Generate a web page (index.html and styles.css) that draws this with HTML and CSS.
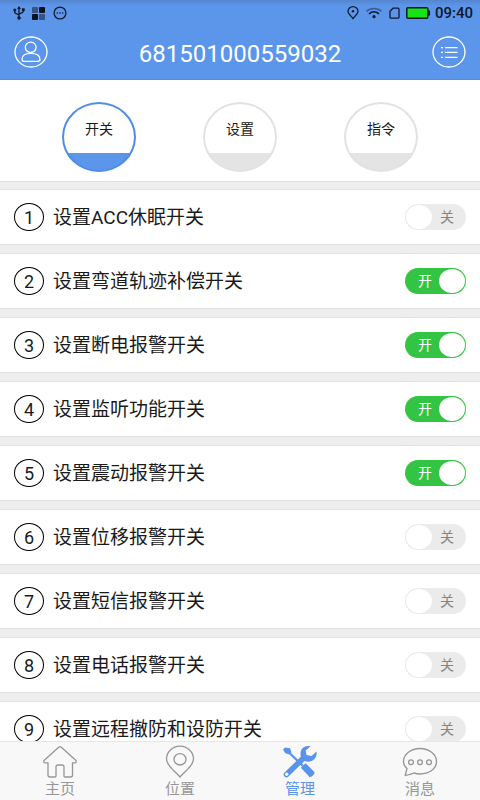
FILE: index.html
```html
<!DOCTYPE html>
<html lang="zh-CN">
<head>
<meta charset="utf-8">
<meta name="viewport" content="width=device-width, initial-scale=1">
<title>管理</title>
<link rel="stylesheet" href="styles.css">
</head>
<body>
<div class="app">
  <header class="top">
    <div class="status">
      <div class="status-group status-left">
        <svg width="12" height="14" viewBox="0 0 12 14" fill="none" stroke="#10182b" stroke-width="1.3"><path d="M6 1v11M1.7 4v2.3c0 1.8 4.3 1.4 4.3 3.4M10.3 3.500v2c0 1.800-4.300 1.500-4.300 3.200"/><path d="M6 0l2 3H4z" fill="#10182b" stroke="none"/><circle cx="1.800" cy="4" r="1.500" fill="#10182b" stroke="none"/><path d="M8.900 2.300h2.800v2.800H8.900z" fill="#10182b" stroke="none"/><circle cx="6" cy="12" r="1.800" fill="#10182b" stroke="none"/></svg>
        <svg width="14" height="13" viewBox="0 0 14 13"><g fill="#0c1120"><rect x="7" y="0" width="6" height="6" rx="1"/><rect x="0" y="7" width="6" height="6" rx="1"/></g><g fill="#37537f"><rect x="0" y="0" width="6" height="6" rx="1"/><rect x="7" y="7" width="6" height="6" rx="1"/></g></svg>
        <svg width="14" height="14" viewBox="0 0 14 14" fill="#10182b"><circle cx="7" cy="7" r="5.900" fill="none" stroke="#10182b" stroke-width="1.300"/><circle cx="4.300" cy="7" r=".8"/><circle cx="7" cy="7" r=".8"/><circle cx="9.700" cy="7" r=".8"/></svg>
      </div>
      <div class="status-group status-right">
        <svg width="12" height="14" viewBox="0 0 12 14" fill="none" stroke="#10182b" stroke-width="1.300"><path d="M6 12.500C4.500 10.500 1 8 1 5.300a5 4.600 0 0 1 10 0C11 8 7.500 10.500 6 12.500z"/><circle cx="6" cy="5.300" r="1.200" fill="#10182b" stroke="none"/></svg>
        <svg width="18" height="12" viewBox="0 0 18 12" fill="none" stroke-width="1.600"><path d="M1.500 4.300C5.500.5 12.500.5 16.500 4.300" stroke="#3b5d97"/><path d="M4 6.900c3-2.600 7-2.600 10 0" stroke="#10182b"/><circle cx="9" cy="9.700" r="1.600" fill="#10182b"/></svg>
        <svg width="11" height="13" viewBox="0 0 11 13" fill="none" stroke="#10182b" stroke-width="1.300"><path d="M4 1.200h5q1 0 1 1v8q0 1-1 1H2q-1 0-1-1V4.200z"/></svg>
        <svg width="24" height="12" viewBox="0 0 24 12"><rect x=".8" y=".8" width="21" height="10.400" rx="1" fill="#17e317" stroke="#10182b" stroke-width="1.500"/><path d="M22 3.500h2v5h-2z" fill="#10182b"/></svg>
        <time class="clock">09:40</time>
      </div>
    </div>
    <div class="bar">
      <button class="round-btn" type="button" aria-label="用户">
        <svg width="34" height="32" viewBox="0 0 34 32" fill="none" stroke="#fff" stroke-width="1.300"><ellipse cx="17" cy="16" rx="16" ry="15"/><ellipse cx="16.700" cy="11.300" rx="5.400" ry="5.200"/><path d="M10 25.300q-2 0-2-2c0-4 4-6 9-6s9 2 9 6q0 2-2 2z"/></svg>
      </button>
      <h1 class="title">681501000559032</h1>
      <button class="round-btn" type="button" aria-label="列表">
        <svg width="34" height="32" viewBox="0 0 34 32" fill="none" stroke="#fff" stroke-width="1.300"><ellipse cx="17" cy="16" rx="16" ry="15"/><path d="M9 11.700h2M13 11.700h12.500M9 16.300h2M13 16.300h12.500M9 21.300h2M13 21.300h12.500"/></svg>
      </button>
    </div>
  </header>

  <main class="content">
    <div class="tabs">
      <button class="tab tab-active" type="button">开关</button>
      <button class="tab" type="button">设置</button>
      <button class="tab" type="button">指令</button>
    </div>
    <ul class="list">
      <li class="row"><span class="num">1</span><label class="name" for="s1">设置ACC休眠开关</label><span class="switch"><input type="checkbox" id="s1"><span class="off">关</span></span></li>
      <li class="row"><span class="num">2</span><label class="name" for="s2">设置弯道轨迹补偿开关</label><span class="switch"><input type="checkbox" id="s2" checked><span class="on">开</span></span></li>
      <li class="row"><span class="num">3</span><label class="name" for="s3">设置断电报警开关</label><span class="switch"><input type="checkbox" id="s3" checked><span class="on">开</span></span></li>
      <li class="row"><span class="num">4</span><label class="name" for="s4">设置监听功能开关</label><span class="switch"><input type="checkbox" id="s4" checked><span class="on">开</span></span></li>
      <li class="row"><span class="num">5</span><label class="name" for="s5">设置震动报警开关</label><span class="switch"><input type="checkbox" id="s5" checked><span class="on">开</span></span></li>
      <li class="row"><span class="num">6</span><label class="name" for="s6">设置位移报警开关</label><span class="switch"><input type="checkbox" id="s6"><span class="off">关</span></span></li>
      <li class="row"><span class="num">7</span><label class="name" for="s7">设置短信报警开关</label><span class="switch"><input type="checkbox" id="s7"><span class="off">关</span></span></li>
      <li class="row"><span class="num">8</span><label class="name" for="s8">设置电话报警开关</label><span class="switch"><input type="checkbox" id="s8"><span class="off">关</span></span></li>
      <li class="row"><span class="num">9</span><label class="name" for="s9">设置远程撤防和设防开关</label><span class="switch"><input type="checkbox" id="s9"><span class="off">关</span></span></li>
    </ul>
  </main>

  <nav class="nav">
    <a class="nav-item" href="#home">
      <svg width="36" height="34" viewBox="0 0 36 34" fill="none" stroke="#969696" stroke-width="1.300" stroke-linejoin="round"><path d="M16.700 2.200q1.300-1 2.600 0L34 15.500q.8 2.500-1.500 2.300H30.500V30q0 2-2 2H23q-1 0-1-1V22q0-2-2-2h-4q-2 0-2 2v9q0 1-1 1H8q-2 0-2-2V17.800H3.500Q1.200 18 2 15.500z"/></svg>
      <span>主页</span>
    </a>
    <a class="nav-item" href="#location">
      <svg width="36" height="34" viewBox="0 0 36 34" fill="none" stroke="#969696" stroke-width="1.300"><path d="M18 32C13 26 4.500 21 4.500 14a13.500 12.800 0 0 1 27 0C31.500 21 23 26 18 32z"/><ellipse cx="18" cy="14.300" rx="6" ry="5.700"/></svg>
      <span>位置</span>
    </a>
    <a class="nav-item nav-active" href="#manage" aria-current="page">
      <svg width="36" height="34" viewBox="0 0 36 34" fill="#5a93ea"><path d="M3 2.500l5 .8 1.500 4-2 2.300-4.200-1.300L1 4.600z"/><path d="M7 7.500L21 21" stroke="#5a93ea" stroke-width="2.200"/><path d="M18.800 22.800l4.800-4.500 9 9q-.5 3.700-4.800 5z"/><path d="M4.500 29.500L22 12.500" stroke="#5a93ea" stroke-width="5.600" stroke-linecap="round"/><path d="M28.500 1.200C23 0 18 3.500 18.500 9.500c.3 5 5 8 9.500 7 4.500-.8 7.300-5 6.500-10L29.500 11l-5-1-.8-4.500z"/><circle cx="4.700" cy="29.300" r="1.700" fill="#f7f7f7"/></svg>
      <span>管理</span>
    </a>
    <a class="nav-item" href="#messages">
      <svg width="36" height="34" viewBox="0 0 36 34" fill="none" stroke="#969696" stroke-width="1.300" stroke-linejoin="round"><path d="M3.200 30.500L5 23.500C2.500 21.500 1.500 19 1.500 16.500 1.500 9 9 3.500 18 3.500s16.500 5.500 16.500 13S27 29 18 29c-3 0-4.500-.5-6-1.200-2 1.500-5 2-8.800 2.700z"/><circle cx="9" cy="17.200" r="2.400"/><circle cx="18" cy="17.200" r="2.400"/><circle cx="27" cy="17.200" r="2.400"/></svg>
      <span>消息</span>
    </a>
  </nav>
</div>
</body>
</html>
```
FILE: styles.css
```css
* {
  box-sizing: border-box;
}

body {
  margin: 0;
  font-family: Roboto, "Noto Sans CJK SC", sans-serif;
  color: #1a1a1a;
  background: #eeeeee;
}

button {
  font: inherit;
  color: inherit;
  padding: 0;
  border: 0;
  background: none;
}

svg {
  display: block;
}

.app {
  display: flex;
  flex-direction: column;
  height: 100vh;
}

/* Header */
.top {
  flex: none;
  background: linear-gradient(#5585cf, #5c96ea 6px);
  border-bottom: 1px solid #5489dc;
}

.status {
  display: flex;
  justify-content: space-between;
  align-items: center;
  height: 26px;
  padding: 0 7px 0 13px;
}

.status-group {
  display: flex;
  align-items: center;
}

.status-left {
  gap: 7px;
}

.status-right {
  gap: 6px;
}

.clock {
  margin-left: -1px;
  font-size: 15px;
  font-weight: 500;
  line-height: 20px;
  color: #10182b;
}

.bar {
  display: flex;
  align-items: center;
  justify-content: space-between;
  padding: 10px 14px 11px;
}

.title {
  margin: 0;
  padding-top: 4px;
  font-size: 24px;
  line-height: 28px;
  font-weight: 400;
  color: #fff;
}

/* Category tabs */
.content {
  flex: 1;
  min-height: 0;
  overflow-y: auto;
  scrollbar-width: none;
}

.tabs {
  display: flex;
  justify-content: center;
  gap: 67px;
  padding: 22px 0 9px;
  background: #fff;
  border-bottom: 1px solid #e0e0e0;
}

.tab {
  width: 74px;
  height: 70px;
  padding-bottom: 16px;
  border: 2px solid #e2e2e2;
  border-radius: 50%;
  background: linear-gradient(#fff 49px, #e4e4e4 49px);
  font-size: 14px;
  line-height: 20px;
}

.tab-active {
  border-color: #4f8de8;
  background: linear-gradient(#fff 49px, #5c96ea 49px);
}

/* Switch list */
.list {
  display: grid;
  gap: 8px;
  margin: 0;
  padding: 7px 0;
  list-style: none;
}

.row {
  display: flex;
  align-items: center;
  height: 56px;
  padding: 0 14px;
  background: #fff;
  border-top: 1px solid #e0e0e0;
  border-bottom: 1px solid #e0e0e0;
}

.num {
  width: 30px;
  height: 28px;
  border: 1px solid #000;
  border-radius: 50%;
  font-size: 18px;
  line-height: 27px;
  text-align: center;
}

.name {
  flex: 1;
  margin-left: 9px;
  padding-top: 1px;
  font-size: 19px;
  line-height: 28px;
}

.switch {
  position: relative;
  display: flex;
  width: 61px;
  height: 26px;
}

.switch input {
  appearance: none;
  display: flex;
  width: 100%;
  margin: 0;
  padding: 1px;
  border-radius: 13px;
  background: #ebebeb;
}

.switch input::before {
  content: "";
  width: 26px;
  height: 24px;
  border-radius: 50%;
  background: #fff;
}

.switch input:checked {
  justify-content: flex-end;
  background: #33c443;
}

.switch span {
  position: absolute;
  top: 3px;
  font-size: 14px;
  line-height: 20px;
  pointer-events: none;
}

.on {
  left: 13px;
  color: #fff;
}

.off {
  right: 12px;
  color: #858585;
}

/* Bottom navigation */
.nav {
  flex: none;
  display: grid;
  grid-template-columns: repeat(4, 1fr);
  padding: 3px 0 1px;
  background: #f8f8f8;
  border-top: 1px solid #e6e6e6;
}

.nav-item {
  display: flex;
  flex-direction: column;
  align-items: center;
  font-size: 15px;
  line-height: 20px;
  color: #969696;
  text-decoration: none;
}

.nav-active {
  color: #5a93ea;
}
```
